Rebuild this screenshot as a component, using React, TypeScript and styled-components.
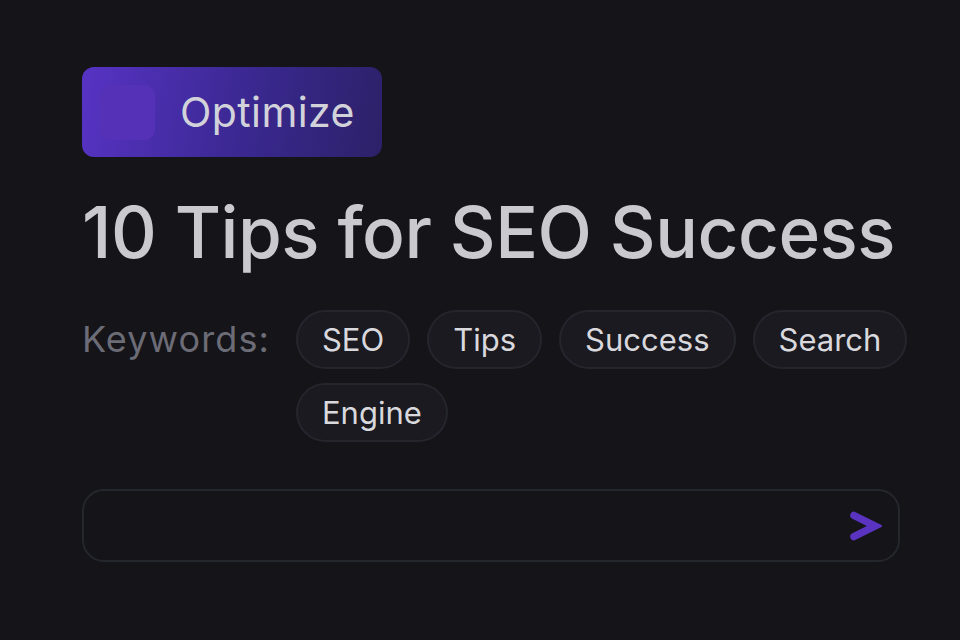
import styled, { createGlobalStyle } from "styled-components";

const GlobalStyle = createGlobalStyle`
  html, body {
    margin: 0;
    padding: 0;
    background: #141419;
  }
  body {
    font-family: Inter, "Noto Sans", sans-serif;
  }
`;

const Page = styled.div`
  width: 960px;
  height: 640px;
  box-sizing: border-box;
  padding: 67px 40px 0 82px;
  display: flex;
  flex-direction: column;
`;

const Badge = styled.div`
  align-self: flex-start;
  width: 300px;
  height: 90px;
  box-sizing: border-box;
  border-radius: 12px;
  background: linear-gradient(100deg, #5733c4 0%, #3a2890 55%, #2c2168 100%);
  display: flex;
  align-items: center;
  padding-left: 18px;
  gap: 25px;
`;

const BadgeSquare = styled.div`
  width: 55px;
  height: 55px;
  border-radius: 11px;
  background: #5431b6;
`;

const BadgeLabel = styled.span`
  font-family: Inter, sans-serif;
  font-size: 41px;
  letter-spacing: 0.4px;
  color: #d2d2da;
`;

const Title = styled.h1`
  margin: 34px 0 0;
  font-family: Inter, sans-serif;
  font-weight: 500;
  font-size: 71px;
  line-height: 82px;
  color: #c9c9ce;
  letter-spacing: -0.5px;
  white-space: nowrap;
`;

const KeywordRow = styled.div`
  margin-top: 37px;
  display: flex;
  align-items: flex-start;
  gap: 26px;
`;

const KeywordLabel = styled.span`
  font-family: Inter, sans-serif;
  font-size: 36px;
  letter-spacing: 1.1px;
  line-height: 59px;
  color: #6c6c76;
  white-space: nowrap;
`;

const Chips = styled.div`
  display: flex;
  flex-wrap: wrap;
  gap: 14px 17px;
  width: 622px;
`;

const Chip = styled.span`
  height: 59px;
  box-sizing: border-box;
  padding: 0 24px;
  border-radius: 30px;
  border: 2px solid #25262d;
  background: #1a1a20;
  display: inline-flex;
  align-items: center;
  font-family: Inter, sans-serif;
  font-size: 31px;
  color: #d8d8dd;
`;

const InputBox = styled.div`
  margin-top: 47px;
  width: 818px;
  height: 73px;
  box-sizing: border-box;
  border: 2px solid #25272e;
  border-radius: 22px;
  display: flex;
  align-items: center;
  justify-content: flex-end;
  padding-right: 16px;
`;

const keywords = ["SEO", "Tips", "Success", "Search", "Engine"];

export default function App() {
  return (
    <>
      <GlobalStyle />
      <Page>
        <Badge>
          <BadgeSquare />
          <BadgeLabel>Optimize</BadgeLabel>
        </Badge>
        <Title>10 Tips for SEO Success</Title>
        <KeywordRow>
          <KeywordLabel>Keywords:</KeywordLabel>
          <Chips>
            {keywords.map((k) => (
              <Chip key={k}>{k}</Chip>
            ))}
          </Chips>
        </KeywordRow>
        <InputBox>
          <svg width="34" height="30" viewBox="0 0 34 30">
            <path
              d="M6 4.5 L27 15 L6 25.5"
              fill="none"
              stroke="#5a34c0"
              strokeWidth="7.5"
              strokeLinecap="round"
              strokeLinejoin="miter"
              strokeMiterlimit="3"
            />
          </svg>
        </InputBox>
      </Page>
    </>
  );
}
